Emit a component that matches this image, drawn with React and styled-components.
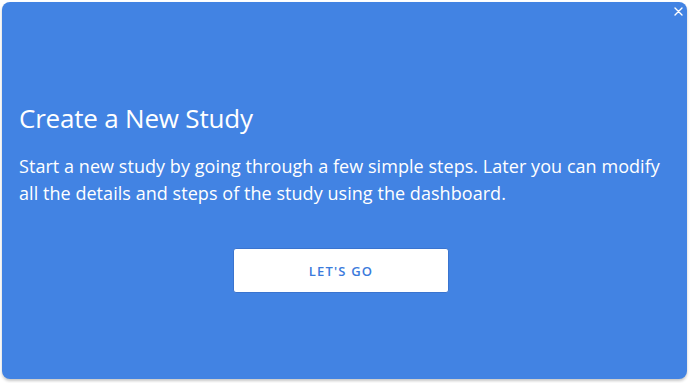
import React from "react";
import styled, { createGlobalStyle } from "styled-components";

const GlobalStyle = createGlobalStyle`
  html, body {
    margin: 0;
    padding: 0;
    background: #ffffff;
  }
  body {
    font-family: "Open Sans", "Noto Sans", sans-serif;
  }
`;

const Page = styled.div`
  width: 690px;
  height: 383px;
  padding: 2px 3px 4px 2px;
  box-sizing: border-box;
`;

const Modal = styled.div`
  position: relative;
  height: 100%;
  box-sizing: border-box;
  background: #4283e3;
  border-radius: 8px;
  box-shadow: 0 2px 3px rgba(0, 0, 0, 0.22);
  padding: 98px 24px 0 17px;
  color: #ffffff;
  display: flex;
  flex-direction: column;
`;

const Close = styled.button`
  position: absolute;
  top: 2px;
  right: 2px;
  width: 14px;
  height: 14px;
  padding: 0;
  border: none;
  background: transparent;
  display: flex;
  align-items: center;
  justify-content: center;
  cursor: pointer;
`;

const Title = styled.h1`
  margin: 0;
  font-size: 26px;
  font-weight: 400;
  line-height: 36px;
  letter-spacing: -0.2px;
`;

const Text = styled.p`
  margin: 17px 0 0;
  font-size: 18px;
  font-weight: 400;
  line-height: 27px;
  letter-spacing: 0.05px;
`;

const Actions = styled.div`
  display: flex;
  justify-content: center;
  margin-top: 41px;
`;

const GoButton = styled.button`
  width: 216px;
  height: 45px;
  background: #ffffff;
  border: 1px solid #3a74cf;
  border-radius: 3px;
  color: #3b7bdc;
  font-family: "Open Sans", "Noto Sans", sans-serif;
  font-size: 13px;
  font-weight: 600;
  letter-spacing: 1.2px;
  cursor: pointer;
`;

export default function App() {
  return (
    <>
      <GlobalStyle />
      <Page>
        <Modal>
          <Close aria-label="Close">
            <svg width="9" height="9" viewBox="0 0 9 9">
              <path d="M1 1 L8 8 M8 1 L1 8" stroke="#ffffff" strokeWidth="1.4" strokeLinecap="round" />
            </svg>
          </Close>
          <Title>Create a New Study</Title>
          <Text>
            Start a new study by going through a few simple steps. Later you can modify
            all the details and steps of the study using the dashboard.
          </Text>
          <Actions>
            <GoButton>LET'S GO</GoButton>
          </Actions>
        </Modal>
      </Page>
    </>
  );
}
